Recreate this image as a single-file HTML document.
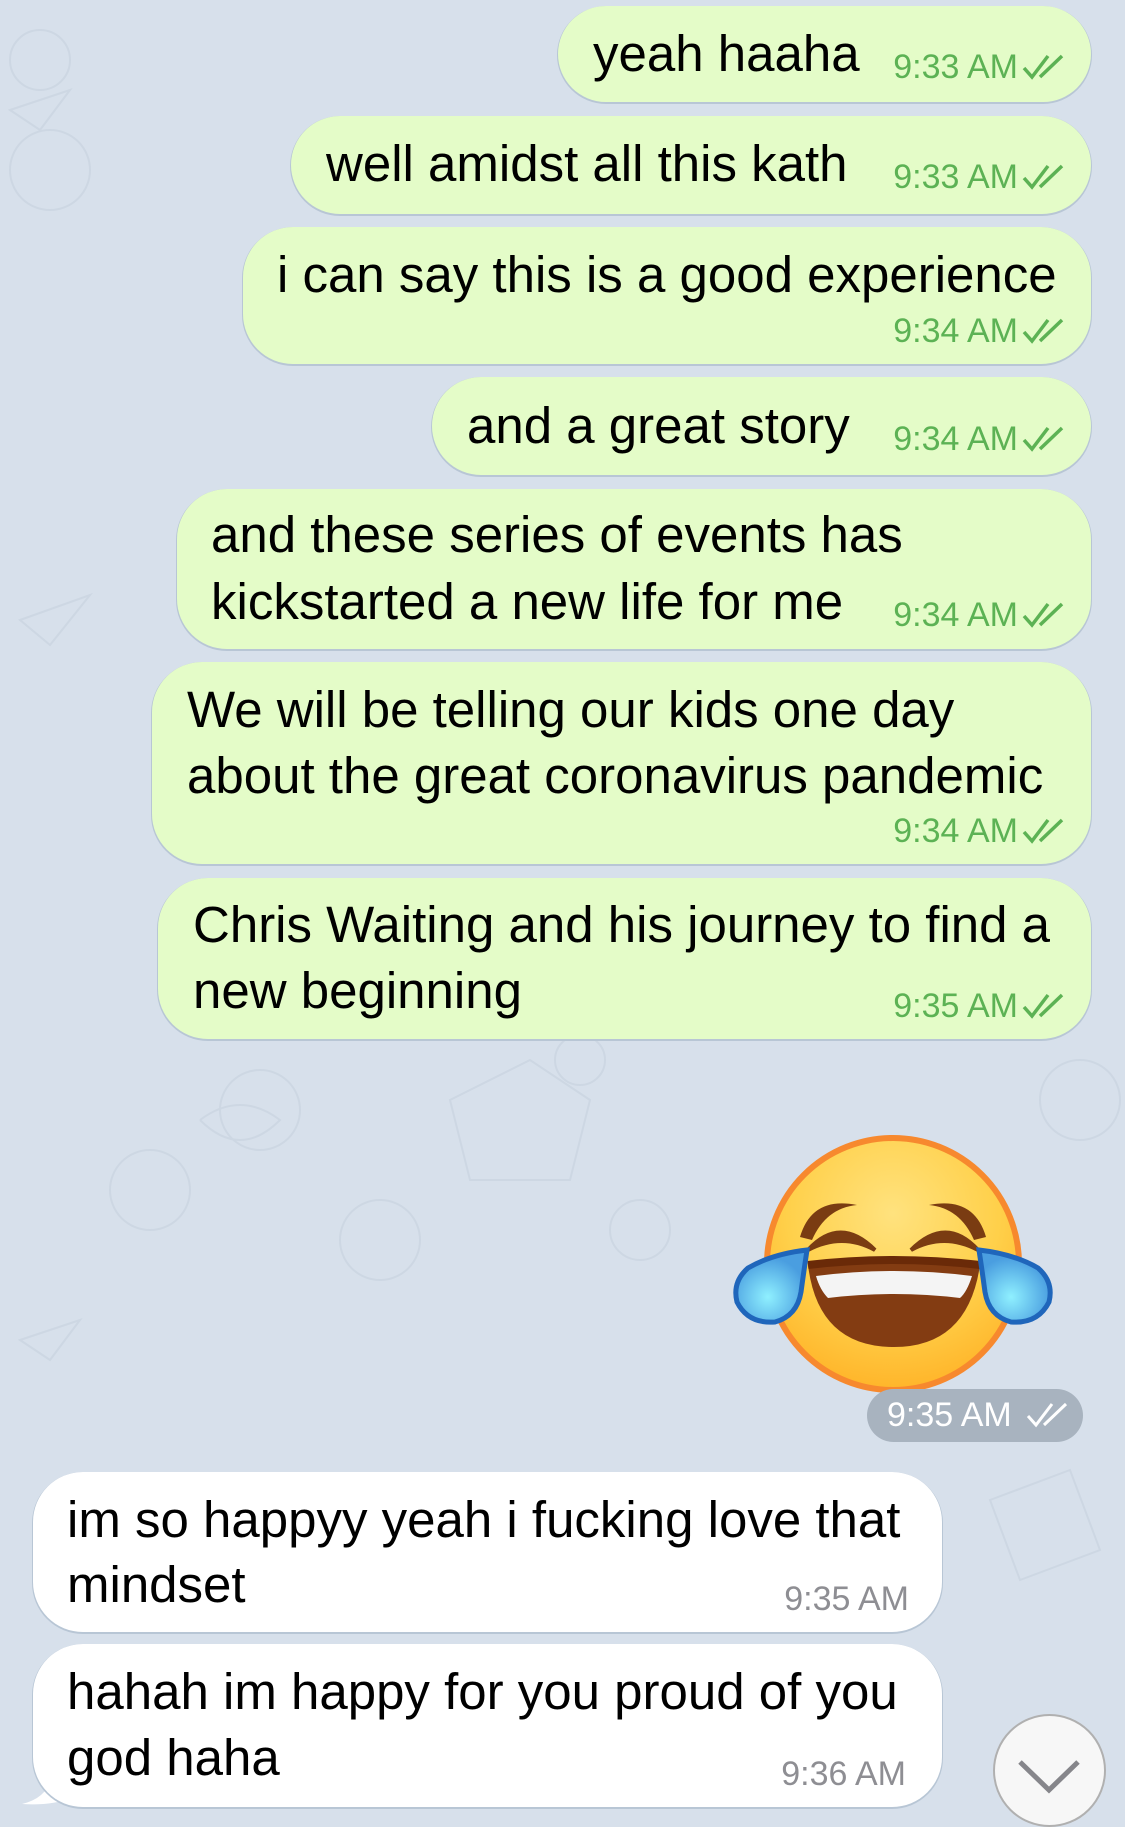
<!DOCTYPE html>
<html><head><meta charset="utf-8"><style>
*{margin:0;padding:0;box-sizing:border-box}
body{width:1125px;height:1824px;overflow:hidden;background:#d7e0eb;position:relative;font-family:"Liberation Sans",sans-serif}
.b{position:absolute;border-radius:50px;background:#e4fcc8;box-shadow:0 1px 0 1px #b8c6d5}
.w{background:#fff}
.t{position:absolute;font-size:51px;line-height:50px;color:#000;white-space:nowrap}
.tm{position:absolute;font-size:34px;line-height:30px;color:#5cb254;white-space:nowrap}
.g{color:#8e8e93}
.ck{position:absolute;width:44px;height:26px}
</style></head><body>
<svg width="1125" height="1824" style="position:absolute;left:0;top:0" fill="none" stroke="#cdd7e3" stroke-width="2">
<circle cx="40" cy="60" r="30"/><path d="M10 110 l60 -20 l-30 40z"/><circle cx="50" cy="170" r="40"/><path d="M20 620 l70 -25 l-40 50z"/>
<circle cx="150" cy="1190" r="40"/><path d="M200 1120 q40 -30 80 0 q-40 40 -80 0"/><circle cx="260" cy="1110" r="40"/>
<path d="M450 1100 l80 -40 l60 40 l-20 80 l-100 0z"/><circle cx="380" cy="1240" r="40"/><path d="M20 1340 l60 -20 l-30 40z"/>
<circle cx="1080" cy="1100" r="40"/><path d="M990 1500 l80 -30 l30 80 l-80 30z"/><circle cx="640" cy="1230" r="30"/>
<path d="M280 1000 q30 -30 60 0 q-30 40 -60 0"/><circle cx="580" cy="1060" r="25"/>
</svg>

<div class="b" style="left:558px;top:6px;width:533px;height:96px"></div>
<div class="t" style="left:593px;top:29px">yeah haaha</div>
<div class="tm" style="right:107px;top:52px">9:33 AM</div>

<div class="b" style="left:291px;top:116px;width:800px;height:98px"></div>
<div class="t" style="left:326px;top:139px">well amidst all this kath</div>
<div class="tm" style="right:107px;top:162px">9:33 AM</div>

<div class="b" style="left:243px;top:227px;width:848px;height:137px"></div>
<div class="t" style="left:277px;top:250px">i can say this is a good experience</div>
<div class="tm" style="right:107px;top:316px">9:34 AM</div>

<div class="b" style="left:432px;top:377px;width:659px;height:98px"></div>
<div class="t" style="left:467px;top:401px">and a great story</div>
<div class="tm" style="right:107px;top:424px">9:34 AM</div>

<div class="b" style="left:177px;top:489px;width:914px;height:160px"></div>
<div class="t" style="left:211px;top:510px">and these series of events has</div>
<div class="t" style="left:211px;top:577px">kickstarted a new life for me</div>
<div class="tm" style="right:107px;top:600px">9:34 AM</div>

<div class="b" style="left:152px;top:662px;width:939px;height:202px"></div>
<div class="t" style="left:187px;top:685px">We will be telling our kids one day</div>
<div class="t" style="left:187px;top:751px">about the great coronavirus pandemic</div>
<div class="tm" style="right:107px;top:816px">9:34 AM</div>

<div class="b" style="left:158px;top:878px;width:933px;height:161px"></div>
<div class="t" style="left:193px;top:900px">Chris Waiting and his journey to find a</div>
<div class="t" style="left:193px;top:966px">new beginning</div>
<div class="tm" style="right:107px;top:991px">9:35 AM</div>

<svg class="ck" style="left:1022px;top:54px" viewBox="0 0 44 26"><path d="M2 14 l8 9 l16 -21 M18 23 l22 -21" stroke="#5cb254" stroke-width="3.5" fill="none"/></svg>
<svg class="ck" style="left:1022px;top:164px" viewBox="0 0 44 26"><path d="M2 14 l8 9 l16 -21 M18 23 l22 -21" stroke="#5cb254" stroke-width="3.5" fill="none"/></svg>
<svg class="ck" style="left:1022px;top:318px" viewBox="0 0 44 26"><path d="M2 14 l8 9 l16 -21 M18 23 l22 -21" stroke="#5cb254" stroke-width="3.5" fill="none"/></svg>
<svg class="ck" style="left:1022px;top:426px" viewBox="0 0 44 26"><path d="M2 14 l8 9 l16 -21 M18 23 l22 -21" stroke="#5cb254" stroke-width="3.5" fill="none"/></svg>
<svg class="ck" style="left:1022px;top:602px" viewBox="0 0 44 26"><path d="M2 14 l8 9 l16 -21 M18 23 l22 -21" stroke="#5cb254" stroke-width="3.5" fill="none"/></svg>
<svg class="ck" style="left:1022px;top:818px" viewBox="0 0 44 26"><path d="M2 14 l8 9 l16 -21 M18 23 l22 -21" stroke="#5cb254" stroke-width="3.5" fill="none"/></svg>
<svg class="ck" style="left:1022px;top:993px" viewBox="0 0 44 26"><path d="M2 14 l8 9 l16 -21 M18 23 l22 -21" stroke="#5cb254" stroke-width="3.5" fill="none"/></svg>

<!-- emoji -->
<svg style="position:absolute;left:720px;top:1120px" width="350" height="290" viewBox="720 1120 350 290">
<defs>
<radialGradient id="fg" cx="50%" cy="30%" r="70%"><stop offset="0" stop-color="#ffe27e"/><stop offset=".6" stop-color="#ffd04a"/><stop offset="1" stop-color="#ffb52a"/></radialGradient>
<radialGradient id="tg" cx="45%" cy="65%" r="55%"><stop offset="0" stop-color="#8ff0ff"/><stop offset="1" stop-color="#4a9ee0"/></radialGradient>
</defs>
<circle cx="893" cy="1264" r="126" fill="url(#fg)" stroke="#f7892e" stroke-width="6"/>
<path d="M800 1237 Q812 1196 857 1205 Q826 1208 812 1240 Z" fill="#7a3c12"/>
<path d="M986 1237 Q974 1196 929 1205 Q960 1208 974 1240 Z" fill="#7a3c12"/>
<path d="M808 1250 Q840 1215 875 1250 Q842 1232 808 1250 Z" fill="#7a3c12" stroke="#7a3c12" stroke-width="4"/>
<path d="M978 1250 Q946 1215 911 1250 Q944 1232 978 1250 Z" fill="#7a3c12" stroke="#7a3c12" stroke-width="4"/>
<path d="M808 1265 q85 -10 172 0 q-12 82 -86 82 q-76 0 -86 -82z" fill="#833c12"/>
<path d="M808 1265 q85 -10 172 0" stroke="#6a2a08" stroke-width="8" fill="none"/>
<path d="M816 1276 q78 -10 156 0 q-5 16 -12 22 q-66 -8 -132 0 q-8 -8 -12 -22z" fill="#f4f4f4"/>
<path d="M807 1250 Q772 1254 748 1268 Q732 1282 737 1302 Q748 1324 775 1322 Q797 1316 801 1292 Q804 1270 807 1250 Z" fill="url(#tg)" stroke="#1f66bb" stroke-width="5"/>
<path d="M979 1250 Q1014 1254 1038 1268 Q1054 1282 1049 1302 Q1038 1324 1011 1322 Q989 1316 985 1292 Q982 1270 979 1250 Z" fill="url(#tg)" stroke="#1f66bb" stroke-width="5"/>
</svg>
<div style="position:absolute;left:867px;top:1389px;width:216px;height:53px;border-radius:27px;background:#a8b3bf"></div>
<div class="tm" style="left:887px;top:1400px;color:#fff">9:35 AM</div>
<svg class="ck" style="left:1026px;top:1402px" viewBox="0 0 44 26"><path d="M2 14 l8 9 l16 -21 M18 23 l22 -21" stroke="#fff" stroke-width="3" fill="none"/></svg>

<div class="b w" style="left:33px;top:1472px;width:909px;height:160px"></div>
<div class="t" style="left:67px;top:1495px">im so happyy yeah i fucking love that</div>
<div class="t" style="left:67px;top:1560px">mindset</div>
<div class="tm g" style="right:216px;top:1584px">9:35 AM</div>

<svg style="position:absolute;left:10px;top:1740px" width="80" height="70"><path d="M40 0 L40 40 Q36 58 12 64 Q40 66 62 58 L70 0z" fill="#fff"/></svg>
<div class="b w" style="left:33px;top:1644px;width:909px;height:163px"></div>
<div class="t" style="left:67px;top:1667px">hahah im happy for you proud of you</div>
<div class="t" style="left:67px;top:1733px">god haha</div>
<div class="tm g" style="right:219px;top:1759px">9:36 AM</div>

<div style="position:absolute;left:993px;top:1714px;width:113px;height:113px;border-radius:50%;background:#f7f7f7;border:2px solid #b0b0b0"></div>
<svg style="position:absolute;left:1010px;top:1750px" width="80" height="50"><path d="M10 12 L39 40 L68 12" stroke="#86868b" stroke-width="5" fill="none"/></svg>
</body></html>
